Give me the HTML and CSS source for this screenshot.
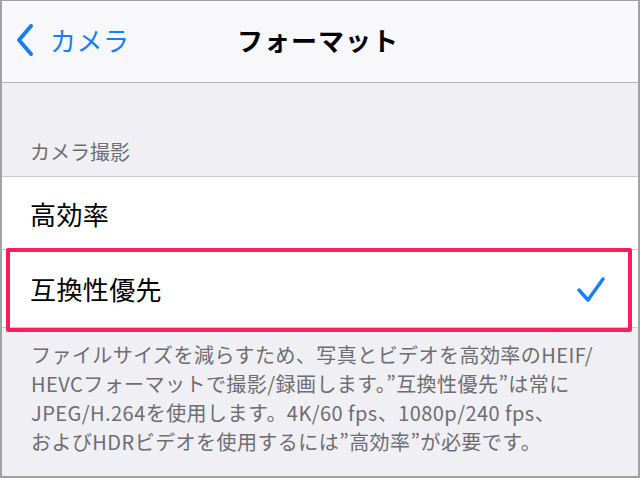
FILE: index.html
```html
<!DOCTYPE html>
<html lang="ja">
<head>
<meta charset="utf-8">
<link rel="stylesheet" href="styles.css">
</head>
<body>
<div class="frame">
  <header class="navbar">
    <div class="back">
      <svg class="chevron" width="20" height="32" viewBox="0 0 20 32"><polyline points="15,2 3,16 15,30" fill="none" stroke="#157efb" stroke-width="4" stroke-linecap="round" stroke-linejoin="round"/></svg>
      <span class="back-label">カメラ</span>
    </div>
    <div class="title">フォーマット</div>
    <div></div>
  </header>
  <div class="section-header">カメラ撮影</div>
  <div class="list">
    <div class="row">高効率</div>
    <div class="row selected">
      <span>互換性優先</span>
      <svg class="check" width="30" height="28" viewBox="0 0 30 28"><polyline points="3,14 12,24 27,3" fill="none" stroke="#157efb" stroke-width="3.4" stroke-linecap="round" stroke-linejoin="round"/></svg>
    </div>
  </div>
  <p class="footer">ファイルサイズを減らすため、写真とビデオを高効率のHEIF/<br>HEVCフォーマットで撮影/録画します。”互換性優先”は常に<br>JPEG/H.264を使用します。4K/60 fps、1080p/240 fps、<br>およびHDRビデオを使用するには”高効率”が必要です。</p>
</div>
</body>
</html>
```
FILE: styles.css
```css
* { box-sizing: border-box; }
html, body { margin: 0; padding: 0; }
body {
  font-family: "Noto Sans CJK JP", "Noto Sans", sans-serif;
  background: #fff;
}
.frame {
  width: 640px;
  height: 478px;
  border: 2px solid #a2a2a2;
  border-top-width: 1px;
  background: #efeff4;
  overflow: hidden;
}
.navbar {
  height: 82px;
  background: #f8f8fa;
  border-bottom: 1px solid #b4b4b6;
  display: grid;
  grid-template-columns: 1fr auto 1fr;
  align-items: center;
  padding-bottom: 4px;
}
.back {
  display: flex;
  align-items: center;
  padding-left: 14px;
  gap: 14px;
  color: #157efb;
}
.back-label {
  font-size: 26px;
  line-height: 1;
  letter-spacing: 0.5px;
}
.title {
  font-size: 26px;
  font-weight: 700;
  color: #000;
  line-height: 1;
  letter-spacing: 1px;
  margin-left: -4px;
}
.section-header {
  height: 93px;
  display: flex;
  align-items: flex-end;
  padding: 0 0 12px 28px;
  font-size: 20px;
  color: #6d6d72;
  line-height: 1.2;
}
.list {
  background: #fff;
  border-top: 1px solid #c8c7cc;
  border-bottom: 1px solid #c8c7cc;
}
.row {
  height: 73px;
  display: flex;
  align-items: center;
  justify-content: space-between;
  padding: 0 32px 0 28px;
  font-size: 26px;
  color: #000;
  border-bottom: 1px solid #c8c7cc;
  letter-spacing: 0.4px;
}
.row:last-child { border-bottom: none; height: 77px; }
.row.selected { position: relative; }
.row.selected::after {
  content: "";
  position: absolute;
  left: 4px;
  right: 6px;
  top: -2px;
  bottom: -5px;
  border: 4px solid #ff1d5e;
  border-radius: 2px;
}
.check { margin-top: 2px; }
.footer {
  margin: 0;
  padding: 12px 0 0 29px;
  font-size: 20px;
  line-height: 29px;
  color: #6d6d72;
  white-space: nowrap;
  letter-spacing: 0.45px;
}
```
